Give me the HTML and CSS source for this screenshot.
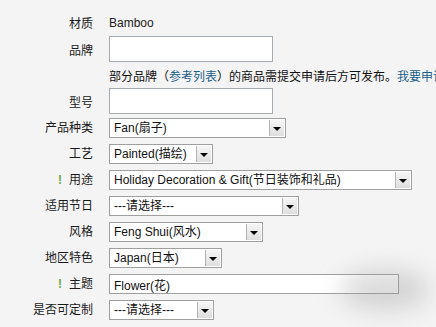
FILE: index.html
```html
<!DOCTYPE html>
<html lang="zh-cn">
	<head>
		<meta http-equiv="Content-Type" content="text/html; charset=utf-8" />
		<title>产品属性</title>
		<link rel="stylesheet" href="styles.css">
	</head>
	<body>
		<div class="attr-form">
			<div class="row row-first">
				<label class="lbl">材质</label>
				<span class="val">Bamboo</span>
			</div>
			<div class="row">
				<label class="lbl">品牌</label>
				<input class="txt txt-brand" type="text">
			</div>
			<div class="row">
				<span class="lbl"></span>
				<p class="tip">部分品牌（<a href="#">参考列表</a>）的商品需提交申请后方可发布。<a href="#">我要申请</a></p>
			</div>
			<div class="row">
				<label class="lbl">型号</label>
				<input class="txt txt-brand" type="text">
			</div>

			<div class="row row-sel">
				<label class="lbl">产品种类</label>
				<div class="sel w176"><span class="sel-text">Fan(扇子)</span><span class="sel-btn"></span></div>
			</div>
			<div class="row row-sel">
				<label class="lbl">工艺</label>
				<div class="sel w104"><span class="sel-text">Painted(描绘)</span><span class="sel-btn"></span></div>
			</div>
			<div class="row row-sel">
				<label class="lbl"><em class="req">!</em>用途</label>
				<div class="sel w303"><span class="sel-text">Holiday Decoration &amp; Gift(节日装饰和礼品)</span><span class="sel-btn"></span></div>
			</div>
			<div class="row row-sel">
				<label class="lbl">适用节日</label>
				<div class="sel w190"><span class="sel-text">---请选择---</span><span class="sel-btn"></span></div>
			</div>
			<div class="row row-sel">
				<label class="lbl">风格</label>
				<div class="sel w154"><span class="sel-text">Feng Shui(风水)</span><span class="sel-btn"></span></div>
			</div>
			<div class="row row-sel">
				<label class="lbl">地区特色</label>
				<div class="sel w113"><span class="sel-text">Japan(日本)</span><span class="sel-btn"></span></div>
			</div>
			<div class="row row-sel">
				<label class="lbl"><em class="req">!</em>主题</label>
				<input class="txt txt-theme" type="text" value="Flower(花)">
			</div>
			<div class="row row-sel">
				<label class="lbl">是否可定制</label>
				<div class="sel w105"><span class="sel-text">---请选择---</span><span class="sel-btn"></span></div>
			</div>
		</div>
		<div class="watermark"></div>
	</body>
</html>
```

FILE: styles.css
```css
*{
	padding: 0;
	margin: 0;
	box-sizing: border-box;
}
html{
	overflow: hidden;
}
body{
	background: #f4f4f4;
	font-family: "Liberation Sans", "Noto Sans CJK SC", sans-serif;
	font-size: 12px;
	color: #1a1a1a;
}
.attr-form {
	padding-top: 9px;
}
.row {
	display: flex;
	align-items: center;
	height: 26px;
	white-space: nowrap;
}
.row-first {
	height: 27px;
}
.row-sel {
	align-items: flex-start;
}
.row-sel .lbl {
	line-height: 20px;
	margin-top: 4px;
}
.row-sel .sel,
.row-sel .txt {
	margin-top: 4px;
}
.lbl {
	flex: none;
	width: 94px;
	padding-right: 1px;
	text-align: right;
	margin-right: 15px;
}
.req {
	font-style: normal;
	font-weight: bold;
	color: #6aa83a;
	margin-right: 7px;
}
.val {
	color: #222;
}
.tip {
	color: #111;
}
.tip a {
	color: #1d5f8a;
	text-decoration: none;
}
.txt {
	height: 26px;
	border: 1px solid #a4abb2;
	background: #fff;
	font-family: inherit;
	font-size: 12px;
	padding: 0 5px;
	color: #111;
	outline: none;
}
.txt-brand {
	width: 164px;
}
.txt-theme {
	height: 20px;
	width: 290px;
	padding: 0 4px;
	border-color: #a0a0a0;
}
.sel {
	display: flex;
	height: 20px;
	border: 1px solid #a0a0a0;
	background: #fff;
}
.sel-text {
	flex: 1;
	padding-left: 4px;
	line-height: 18px;
	overflow: hidden;
	color: #111;
}
.sel-btn {
	flex: none;
	width: 15px;
	margin: 1px 1px 1px 0;
	border-left: 1px solid #b4b4b4;
	background: linear-gradient(#f6f6f6, #dedede);
	position: relative;
}
.sel-btn:after {
	content: "";
	position: absolute;
	left: 3px;
	top: 7px;
	border-left: 4px solid transparent;
	border-right: 4px solid transparent;
	border-top: 4px solid #000;
}
.w176 { width: 177px; }
.w104 { width: 104px; }
.w303 { width: 303px; }
.w190 { width: 190px; }
.w154 { width: 154px; }
.w113 { width: 113px; }
.w105 { width: 105px; }

.watermark {
	position: absolute;
	left: 340px;
	top: 270px;
	width: 90px;
	height: 40px;
	border-radius: 50%;
	background: rgba(150, 150, 150, 0.35);
	filter: blur(12px);
}
```
